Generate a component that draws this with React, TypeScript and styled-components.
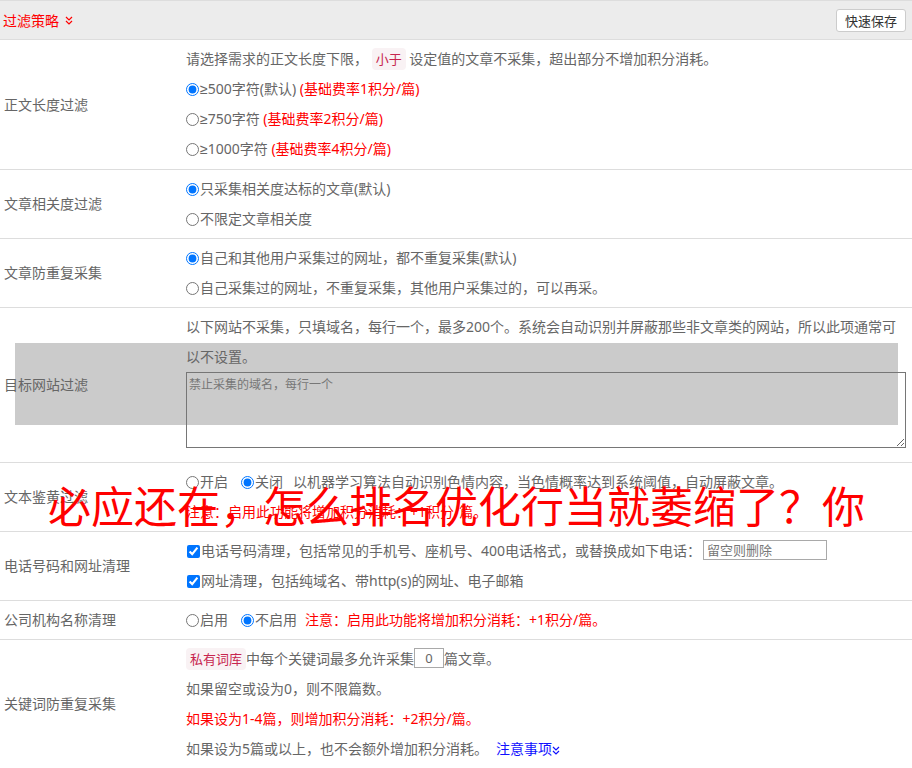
import React from "react";
import styled, { createGlobalStyle } from "styled-components";

const GlobalStyle = createGlobalStyle`
  body {
    margin: 0;
    background: #fff;
    font-family: "Noto Sans", "Noto Sans CJK SC", sans-serif;
    font-size: 14px;
    color: #666;
  }
`;

const Page = styled.div`
  position: relative;
  width: 912px;
`;

const Content = styled.div`
  position: relative;
  z-index: 1;
`;

const Header = styled.div`
  display: flex;
  align-items: center;
  justify-content: space-between;
  height: 38px;
  padding: 0 6px 0 3px;
  background: #ececec;
  border-top: 1px solid #ddd;
  border-bottom: 1px solid #ddd;
`;

const Title = styled.div`
  display: flex;
  align-items: center;
  gap: 6px;
  color: #f00;
  font-size: 14px;
`;

const SaveButton = styled.button`
  height: 23px;
  padding: 0 8px;
  font-family: inherit;
  font-size: 13px;
  color: #333;
  background: #fff;
  border: 1px solid #ccc;
  border-radius: 3px;
`;

const Row = styled.div`
  display: grid;
  grid-template-columns: 186px 1fr;
  border-bottom: 1px solid #ddd;
`;

const Label = styled.div`
  align-self: center;
  padding-left: 4px;
  padding-bottom: 2px;
`;

const Value = styled.div<{ $bottom?: number }>`
  padding: 4px 6px ${(p) => p.$bottom ?? 4}px 0;
`;

const Line = styled.div<{ $red?: boolean }>`
  line-height: 30px;
  color: ${(p) => (p.$red ? "#f00" : "#666")};
  white-space: nowrap;
`;

const Para = styled.div`
  line-height: 30px;
`;

const Choice = styled.label<{ $gap?: number }>`
  margin-right: ${(p) => p.$gap ?? 0}px;
  white-space: nowrap;
`;

const Sym = styled.span`
  font-family: "Liberation Sans", sans-serif;
`;

const Radio = styled.input.attrs({ type: "radio" })`
  width: 13px;
  height: 13px;
  margin: 0 1px 0 0;
  vertical-align: -2px;
  accent-color: #0075ff;
`;

const Check = styled.input.attrs({ type: "checkbox" })`
  width: 13px;
  height: 13px;
  margin: 0 1px 0 1px;
  vertical-align: -2px;
  accent-color: #0075ff;
`;

const Red = styled.span`
  color: #f00;
`;

const Code = styled.code`
  padding: 2px 4px;
  font-family: inherit;
  font-size: 13px;
  color: #c7254e;
  background: #f9f2f4;
  border-radius: 4px;
`;

const TextArea = styled.textarea`
  display: block;
  box-sizing: border-box;
  width: 100%;
  height: 76px;
  margin-bottom: 10px;
  padding: 2px 2px;
  font-family: inherit;
  font-size: 12px;
  color: #555;
  background: transparent;
  border: 1px solid #767676;
  &::placeholder {
    color: #777;
  }
`;

const SmallInput = styled.input<{ $w: number; $center?: boolean }>`
  box-sizing: border-box;
  width: ${(p) => p.$w}px;
  height: 20px;
  margin: 0 ${(p) => (p.$center ? 0 : 2)}px;
  padding: 0 3px;
  font-family: inherit;
  font-size: 13px;
  color: #666;
  text-align: ${(p) => (p.$center ? "center" : "left")};
  border: 1px solid #a9a9a9;
  vertical-align: 1px;
  &::placeholder {
    color: #777;
  }
`;

const BlueLink = styled.a`
  margin-left: 8px;
  color: #1010ff;
  text-decoration: none;
`;

const Shade = styled.div`
  position: absolute;
  left: 15px;
  top: 343px;
  width: 883px;
  height: 82px;
  background: #cbcbcb;
  z-index: 0;
`;

const Watermark = styled.div`
  position: absolute;
  left: 48px;
  top: 475px;
  z-index: 2;
  font-family: "Noto Sans CJK SC", sans-serif;
  font-size: 43px;
  line-height: 58px;
  color: #f00;
  white-space: nowrap;
  pointer-events: none;
`;

const Chevrons = ({ color }: { color: string }) => (
  <svg width="8" height="9" viewBox="0 0 8 9" style={{ verticalAlign: "middle" }}>
    <polyline points="1,1 4,4 7,1" fill="none" stroke={color} strokeWidth="1.2" />
    <polyline points="1,5 4,8 7,5" fill="none" stroke={color} strokeWidth="1.2" />
  </svg>
);

export default function App() {
  return (
    <Page>
      <GlobalStyle />
      <Shade />
      <Content>
        <Header>
          <Title>
            过滤策略
            <Chevrons color="#f00" />
          </Title>
          <SaveButton>快速保存</SaveButton>
        </Header>

        <Row>
          <Label>正文长度过滤</Label>
          <Value $bottom={5}>
            <Line>
              请选择需求的正文长度下限， <Code>小于</Code> 设定值的文章不采集，超出部分不增加积分消耗。
            </Line>
            <Line>
              <Choice>
                <Radio name="len" defaultChecked />
                <Sym>≥</Sym>500字符(默认)
              </Choice>{" "}
              <Red>(基础费率1积分/篇)</Red>
            </Line>
            <Line>
              <Choice>
                <Radio name="len" />
                <Sym>≥</Sym>750字符
              </Choice>{" "}
              <Red>(基础费率2积分/篇)</Red>
            </Line>
            <Line>
              <Choice>
                <Radio name="len" />
                <Sym>≥</Sym>1000字符
              </Choice>{" "}
              <Red>(基础费率4积分/篇)</Red>
            </Line>
          </Value>
        </Row>

        <Row>
          <Label>文章相关度过滤</Label>
          <Value>
            <Line>
              <Choice>
                <Radio name="rel" defaultChecked />只采集相关度达标的文章(默认)
              </Choice>
            </Line>
            <Line>
              <Choice>
                <Radio name="rel" />不限定文章相关度
              </Choice>
            </Line>
          </Value>
        </Row>

        <Row>
          <Label>文章防重复采集</Label>
          <Value>
            <Line>
              <Choice>
                <Radio name="dup" defaultChecked />自己和其他用户采集过的网址，都不重复采集(默认)
              </Choice>
            </Line>
            <Line>
              <Choice>
                <Radio name="dup" />自己采集过的网址，不重复采集，其他用户采集过的，可以再采。
              </Choice>
            </Line>
          </Value>
        </Row>

        <Row>
          <Label>目标网站过滤</Label>
          <Value>
            <Para>
              以下网站不采集，只填域名，每行一个，最多200个。系统会自动识别并屏蔽那些非文章类的网站，所以此项通常可以不设置。
            </Para>
            <TextArea placeholder="禁止采集的域名，每行一个" />
          </Value>
        </Row>

        <Row>
          <Label>文本鉴黄过滤</Label>
          <Value>
            <Line>
              <Choice $gap={13}>
                <Radio name="porn" />开启
              </Choice>
              <Choice $gap={10}>
                <Radio name="porn" defaultChecked />关闭
              </Choice>
              以机器学习算法自动识别色情内容，当色情概率达到系统阈值，自动屏蔽文章。
            </Line>
            <Line $red>注意：启用此功能将增加积分消耗：+1积分/篇。</Line>
          </Value>
        </Row>

        <Row>
          <Label>电话号码和网址清理</Label>
          <Value>
            <Line>
              <Choice>
                <Check defaultChecked />电话号码清理，包括常见的手机号、座机号、400电话格式，或替换成如下电话：
              </Choice>
              <SmallInput $w={124} placeholder="留空则删除" />
            </Line>
            <Line>
              <Choice>
                <Check defaultChecked />网址清理，包括纯域名、带http(s)的网址、电子邮箱
              </Choice>
            </Line>
          </Value>
        </Row>

        <Row>
          <Label>公司机构名称清理</Label>
          <Value>
            <Line>
              <Choice $gap={13}>
                <Radio name="org" />启用
              </Choice>
              <Choice $gap={8}>
                <Radio name="org" defaultChecked />不启用
              </Choice>
              <Red>注意：启用此功能将增加积分消耗：+1积分/篇。</Red>
            </Line>
          </Value>
        </Row>

        <Row>
          <Label>关键词防重复采集</Label>
          <Value>
            <Line>
              <Code>私有词库</Code>中每个关键词最多允许采集
              <SmallInput $w={30} $center defaultValue="0" />
              篇文章。
            </Line>
            <Line>如果留空或设为0，则不限篇数。</Line>
            <Line $red>如果设为1-4篇，则增加积分消耗：+2积分/篇。</Line>
            <Line>
              如果设为5篇或以上，也不会额外增加积分消耗。
              <BlueLink href="#">
                注意事项
                <Chevrons color="#1010ff" />
              </BlueLink>
            </Line>
          </Value>
        </Row>
      </Content>
      <Watermark>必应还在，怎么排名优化行当就萎缩了？你</Watermark>
    </Page>
  );
}
